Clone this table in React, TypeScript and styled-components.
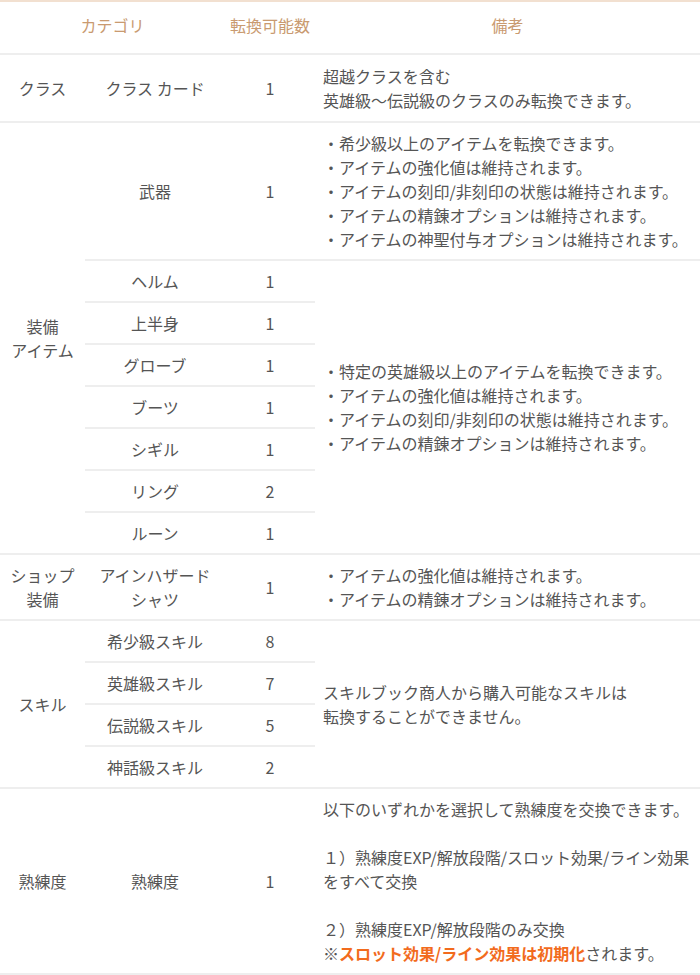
import React from "react";
import styled, { createGlobalStyle } from "styled-components";

const GlobalStyle = createGlobalStyle`
  body {
    margin: 0;
    background: #fff;
    font-family: "Noto Sans CJK JP", "Noto Sans", sans-serif;
  }
`;

const Table = styled.table`
  width: 700px;
  border-collapse: collapse;
  table-layout: fixed;
  font-size: 16px;
  line-height: 24px;
  color: #555;
  border-top: 2px solid #f2e0d0;
  border-bottom: 2px solid #f2e0d0;
`;

const Head = styled.th`
  padding: 11px 0 16px;
  font-weight: normal;
  color: #c99a70;
  text-align: center;
  border-bottom: 2px solid #eeeeee;
`;

const Row = styled.tr<{ $roomy?: boolean }>`
  & > td {
    padding-top: ${(p) => (p.$roomy ? "9px" : "8px")};
    padding-bottom: ${(p) => (p.$roomy ? "9px" : "8px")};
  }
`;

const Cell = styled.td<{ $note?: boolean }>`
  padding: ${(p) => (p.$note ? "8px 4px 8px 8px" : "8px 0")};
  text-align: ${(p) => (p.$note ? "left" : "center")};
  vertical-align: middle;
  border-bottom: 2px solid #eeeeee;
`;

const Line = styled.div`
  white-space: nowrap;
  min-height: 24px;
`;

const Alert = styled.strong`
  color: #f26b1d;
  font-weight: bold;
`;

const Note = ({ lines }: { lines: React.ReactNode[] }) => (
  <Cell $note>
    {lines.map((l, i) => (
      <Line key={i}>{l}</Line>
    ))}
  </Cell>
);

const gearNote = [
  "・特定の英雄級以上のアイテムを転換できます。",
  "・アイテムの強化値は維持されます。",
  "・アイテムの刻印/非刻印の状態は維持されます。",
  "・アイテムの精錬オプションは維持されます。",
];

const gear: [string, number][] = [
  ["ヘルム", 1],
  ["上半身", 1],
  ["グローブ", 1],
  ["ブーツ", 1],
  ["シギル", 1],
  ["リング", 2],
  ["ルーン", 1],
];

const skills: [string, number][] = [
  ["希少級スキル", 8],
  ["英雄級スキル", 7],
  ["伝説級スキル", 5],
  ["神話級スキル", 2],
];

export default function App() {
  return (
    <>
      <GlobalStyle />
      <Table>
        <colgroup>
          <col style={{ width: 85 }} />
          <col style={{ width: 140 }} />
          <col style={{ width: 90 }} />
          <col />
        </colgroup>
        <thead>
          <tr>
            <Head colSpan={2}>カテゴリ</Head>
            <Head>転換可能数</Head>
            <Head>備考</Head>
          </tr>
        </thead>
        <tbody>
          <Row $roomy>
            <Cell>クラス</Cell>
            <Cell>クラス カード</Cell>
            <Cell>1</Cell>
            <Note lines={["超越クラスを含む", "英雄級～伝説級のクラスのみ転換できます。"]} />
          </Row>
          <Row>
            <Cell rowSpan={8}>
              装備
              <br />
              アイテム
            </Cell>
            <Cell>武器</Cell>
            <Cell>1</Cell>
            <Note
              lines={[
                "・希少級以上のアイテムを転換できます。",
                "・アイテムの強化値は維持されます。",
                "・アイテムの刻印/非刻印の状態は維持されます。",
                "・アイテムの精錬オプションは維持されます。",
                "・アイテムの神聖付与オプションは維持されます。",
              ]}
            />
          </Row>
          {gear.map(([name, n], i) => (
            <Row key={name}>
              <Cell>{name}</Cell>
              <Cell>{n}</Cell>
              {i === 0 && (
                <Cell $note rowSpan={gear.length}>
                  {gearNote.map((l) => (
                    <Line key={l}>{l}</Line>
                  ))}
                </Cell>
              )}
            </Row>
          ))}
          <Row>
            <Cell>
              ショップ
              <br />
              装備
            </Cell>
            <Cell>
              アインハザード
              <br />
              シャツ
            </Cell>
            <Cell>1</Cell>
            <Note
              lines={[
                "・アイテムの強化値は維持されます。",
                "・アイテムの精錬オプションは維持されます。",
              ]}
            />
          </Row>
          {skills.map(([name, n], i) => (
            <Row key={name}>
              {i === 0 && <Cell rowSpan={skills.length}>スキル</Cell>}
              <Cell>{name}</Cell>
              <Cell>{n}</Cell>
              {i === 0 && (
                <Cell $note rowSpan={skills.length}>
                  <Line>スキルブック商人から購入可能なスキルは</Line>
                  <Line>転換することができません。</Line>
                </Cell>
              )}
            </Row>
          ))}
          <Row>
            <Cell>熟練度</Cell>
            <Cell>熟練度</Cell>
            <Cell>1</Cell>
            <Note
              lines={[
                "以下のいずれかを選択して熟練度を交換できます。",
                "",
                "１）熟練度EXP/解放段階/スロット効果/ライン効果",
                "をすべて交換",
                "",
                "２）熟練度EXP/解放段階のみ交換",
                <>
                  ※<Alert>スロット効果/ライン効果は初期化</Alert>されます。
                </>,
              ]}
            />
          </Row>
        </tbody>
      </Table>
    </>
  );
}
